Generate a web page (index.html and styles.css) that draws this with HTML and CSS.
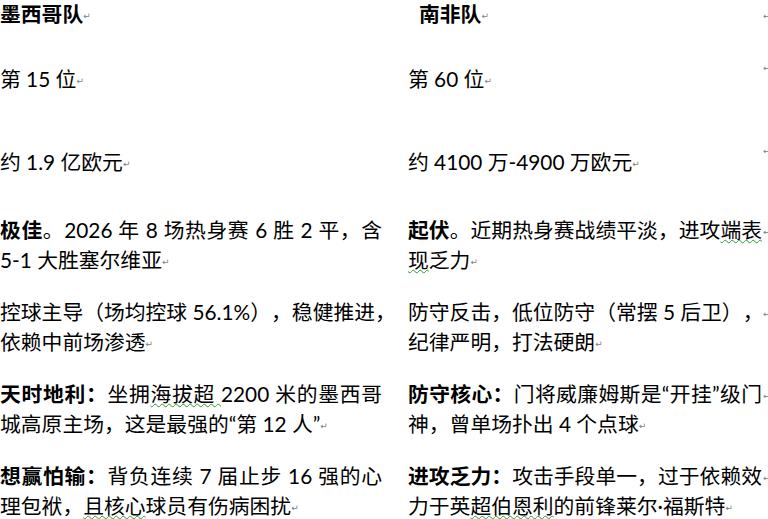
FILE: index.html
```html
<!DOCTYPE html>
<html lang="zh-CN">
<head>
<meta charset="utf-8">
<title>墨西哥队 vs 南非队</title>
<link rel="stylesheet" href="styles.css">
</head>
<body>
<div class="doc">
  <div class="row r1">
    <div class="cell cl"><span class="b">墨西哥队</span><span class="pm">↵</span></div>
    <div class="cell cr hd"><span class="b">南非队</span><span class="pm">↵</span></div>
    <div class="mk"><span class="pm">↵</span></div>
  </div>
  <div class="row r2">
    <div class="cell cl">第 15 位<span class="pm">↵</span></div>
    <div class="cell cr">第 60 位<span class="pm">↵</span></div>
    <div class="mk mk-top"><span class="pm">↵</span></div>
  </div>
  <div class="row r3">
    <div class="cell cl">约 1.9 亿欧元<span class="pm">↵</span></div>
    <div class="cell cr">约 4100 万-4900 万欧元<span class="pm">↵</span></div>
    <div class="mk mk-top"><span class="pm">↵</span></div>
  </div>
  <div class="row r4">
    <div class="cell cl"><span class="ln"><span class="b">极佳</span>。2026 年 8 场热身赛 6 胜 2 平，含</span>5-1 大胜塞尔维亚<span class="pm">↵</span></div>
    <div class="cell cr"><span class="ln"><span class="b">起伏</span>。近期热身赛战绩平淡，进攻<span class="sp">端表</span></span><span class="sp">现</span>乏力<span class="pm">↵</span></div>
    <div class="mk"><span class="pm">↵</span></div>
  </div>
  <div class="row r5">
    <div class="cell cl"><span class="ln">控球主导（场均控球 56.1%），稳健推进，</span>依赖中前场渗透<span class="pm">↵</span></div>
    <div class="cell cr"><span class="ln">防守反击，低位防守（常摆 5 后卫），</span>纪律严明，打法硬朗<span class="pm">↵</span></div>
    <div class="mk"><span class="pm">↵</span></div>
  </div>
  <div class="row r6">
    <div class="cell cl"><span class="ln"><span class="b">天时地利：</span>坐拥<span class="sp">海拔超 </span>2200 米的墨西哥</span>城高原主场，这是最强的“第 12 人”<span class="pm">↵</span></div>
    <div class="cell cr"><span class="ln"><span class="b">防守核心：</span>门将威廉姆斯是“开挂”级门</span>神，曾单场扑出 4 个点球<span class="pm">↵</span></div>
    <div class="mk"><span class="pm">↵</span></div>
  </div>
  <div class="row r7">
    <div class="cell cl"><span class="ln"><span class="b">想赢怕输：</span>背负连续 7 届止步 16 强的心</span>理包袱，<span class="sp">且核心</span>球员有伤病困扰<span class="pm">↵</span></div>
    <div class="cell cr"><span class="ln"><span class="b">进攻乏力：</span>攻击手段单一，过于依赖效</span>力于英<span class="sp">超伯恩利</span>的前锋莱尔·福斯特<span class="pm">↵</span></div>
    <div class="mk"><span class="pm">↵</span></div>
  </div>
</div>
</body>
</html>
```
FILE: styles.css
```css
html, body {
  margin: 0;
  padding: 0;
  background: #ffffff;
  overflow: hidden;
}

body {
  width: 768px;
  height: 519px;
  font-family: Lato, "Noto Sans CJK SC", sans-serif;
  font-size: 20.8px;
  line-height: 30px;
  color: #000000;
  text-spacing-trim: space-all;
}

.doc {
  display: flex;
  flex-direction: column;
  margin-top: -1px;
}

.row {
  display: flex;
  flex: none;
}

.r1 { height: 65px; }
.r2 { height: 83px; }
.r3 { height: 68px; }
.r4 { height: 82px; }
.r5 { height: 82px; }
.r6 { height: 82px; }
.r7 { height: 82px; }

.cell {
  flex: none;
  white-space: nowrap;
}

.cl {
  width: 382px;
  margin-right: 26px;
}

.cr {
  width: 354px;
}

.hd {
  padding-left: 11px;
  width: 343px;
}

.ln {
  display: block;
  text-align: justify;
  text-align-last: justify;
}

.b {
  font-weight: 700;
}

.sp {
  text-decoration: underline wavy #2f9a2f;
  text-decoration-thickness: 1px;
  text-underline-offset: 1px;
}

.pm {
  font-family: "DejaVu Sans", sans-serif;
  font-size: 9px;
  line-height: 1;
  color: #808080;
  vertical-align: 3px;
  font-weight: 400;
}

.mk {
  flex: none;
  width: 6px;
  padding-left: 1px;
  line-height: 30px;
}

.mk-top {
  line-height: 2px;
}
```
